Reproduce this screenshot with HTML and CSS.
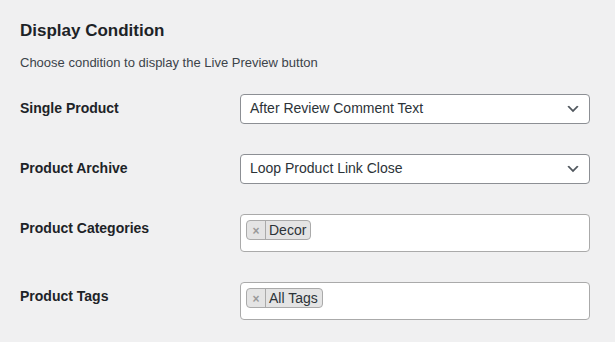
FILE: index.html
```html
<!DOCTYPE html>
<html lang="en">
<head>
    <meta charset="UTF-8">
    <title>Display Condition</title>
    <link rel="stylesheet" href="styles.css">
</head>
<body>
    <div class="wrap">
        <h2>Display Condition</h2>
        <p class="description">Choose condition to display the Live Preview button</p>
        <table class="form-table">
            <tr>
                <th>Single Product</th>
                <td>
                    <div class="select">
                        <span>After Review Comment Text</span>
                        <svg width="16" height="16" viewBox="0 0 20 20"><path d="M5 6l5 5 5-5 2 1-7 7-7-7 2-1z" fill="#50575e"/></svg>
                    </div>
                </td>
            </tr>
            <tr>
                <th>Product Archive</th>
                <td>
                    <div class="select">
                        <span>Loop Product Link Close</span>
                        <svg width="16" height="16" viewBox="0 0 20 20"><path d="M5 6l5 5 5-5 2 1-7 7-7-7 2-1z" fill="#50575e"/></svg>
                    </div>
                </td>
            </tr>
            <tr>
                <th>Product Categories</th>
                <td>
                    <div class="multi">
                        <span class="tag"><span class="remove">×</span><span class="tag-text">Decor</span></span>
                    </div>
                </td>
            </tr>
            <tr>
                <th>Product Tags</th>
                <td>
                    <div class="multi">
                        <span class="tag"><span class="remove">×</span><span class="tag-text">All Tags</span></span>
                    </div>
                </td>
            </tr>
        </table>
    </div>
</body>
</html>
```
FILE: styles.css
```css
* {
    box-sizing: border-box;
}

body {
    margin: 0;
    background: #f0f0f1;
    color: #3c434a;
    font-family: 'Liberation Sans', Arial, sans-serif;
    font-size: 13px;
    line-height: 1.4;
}

.wrap {
    padding: 20px 0 0 20px;
}

h2 {
    margin: 0;
    font-size: 17px;
    font-weight: 600;
    line-height: 1.3;
    color: #1d2327;
}

.description {
    margin: 12px 0 0;
}

.form-table {
    border-collapse: collapse;
    margin-top: 7px;
}

.form-table th {
    width: 210px;
    padding: 20px 10px 20px 0;
    text-align: left;
    vertical-align: top;
    font-size: 14px;
    font-weight: 600;
    line-height: 1.3;
    color: #1d2327;
}

.form-table td {
    padding: 15px 10px;
    vertical-align: top;
}

.select {
    width: 350px;
    height: 30px;
    display: flex;
    align-items: center;
    justify-content: space-between;
    padding: 0 8px 0 9px;
    background: #fff;
    border: 1px solid #8c8f94;
    border-radius: 4px;
    font-size: 14px;
    color: #2c3338;
}

.multi {
    width: 350px;
    height: 38px;
    padding: 5px 5px;
    background: #fff;
    border: 1px solid #aaa;
    border-radius: 4px;
}

.tag {
    display: inline-flex;
    height: 20px;
    background: #e4e4e4;
    border: 1px solid #aaa;
    border-radius: 4px;
    font-size: 14px;
    color: #2c3338;
    line-height: 18px;
}

.remove {
    width: 19px;
    text-align: center;
    color: #999;
    font-weight: bold;
    font-size: 12px;
    padding-top: 1px;
    border-right: 1px solid #aaa;
}

.tag-text {
    padding: 0 4px 0 3px;
}
```
